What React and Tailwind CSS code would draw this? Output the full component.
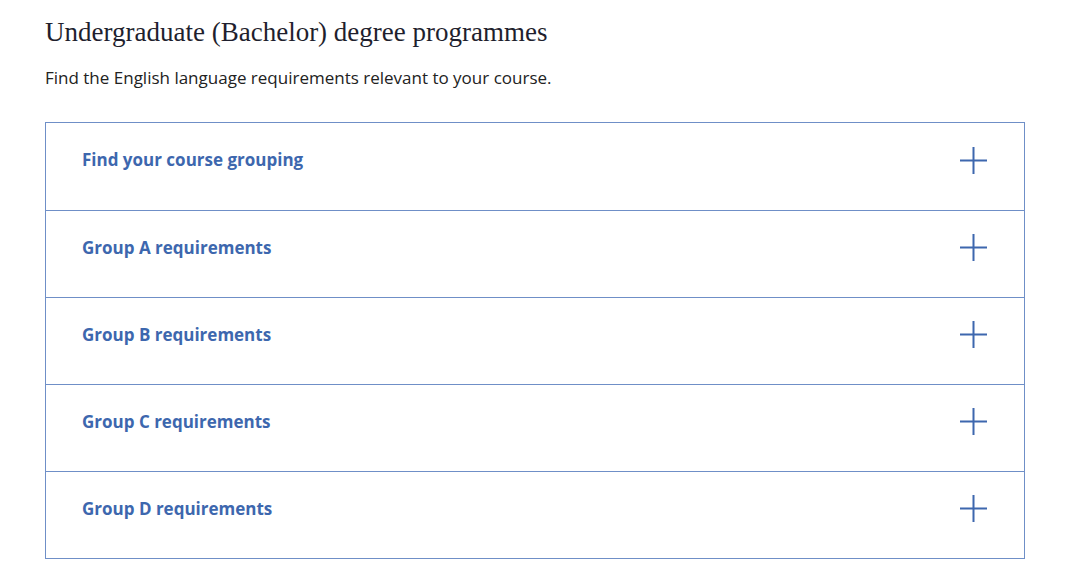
import React from "react";

const groups = [
  "Find your course grouping",
  "Group A requirements",
  "Group B requirements",
  "Group C requirements",
  "Group D requirements",
];

const PlusIcon = () => (
  <svg width="29" height="29" viewBox="0 0 29 29" fill="none" stroke="#3d67ae" strokeWidth="2">
    <path d="M14.5 1v27M1 14.5h27" />
  </svg>
);

export default function App() {
  return (
    <div className="min-h-screen bg-white pl-[45px] pt-[14px] w-[1025px]">
      <h2
        className="text-[27px] leading-[36px] text-[#1f1f2e]"
        style={{ fontFamily: '"Liberation Serif", serif' }}
      >
        Undergraduate (Bachelor) degree programmes
      </h2>
      <p
        className="mt-[15px] text-[17px] leading-[26px] text-[#222]"
        style={{ fontFamily: '"Open Sans", sans-serif' }}
      >
        Find the English language requirements relevant to your course.
      </p>
      <div className="mt-[31px] border border-[#6f8fc7]">
        {groups.map((g, i) => (
          <button
            key={g}
            className={
              "flex w-full h-[87px] items-center justify-between pl-[36px] pr-[36px] pb-[13px] text-left " +
              (i > 0 ? "border-t border-[#6f8fc7]" : "")
            }
          >
            <span
              className="text-[17px] font-bold text-[#3d67ae]"
              style={{ fontFamily: '"Open Sans", sans-serif' }}
            >
              {g}
            </span>
            <PlusIcon />
          </button>
        ))}
      </div>
    </div>
  );
}
